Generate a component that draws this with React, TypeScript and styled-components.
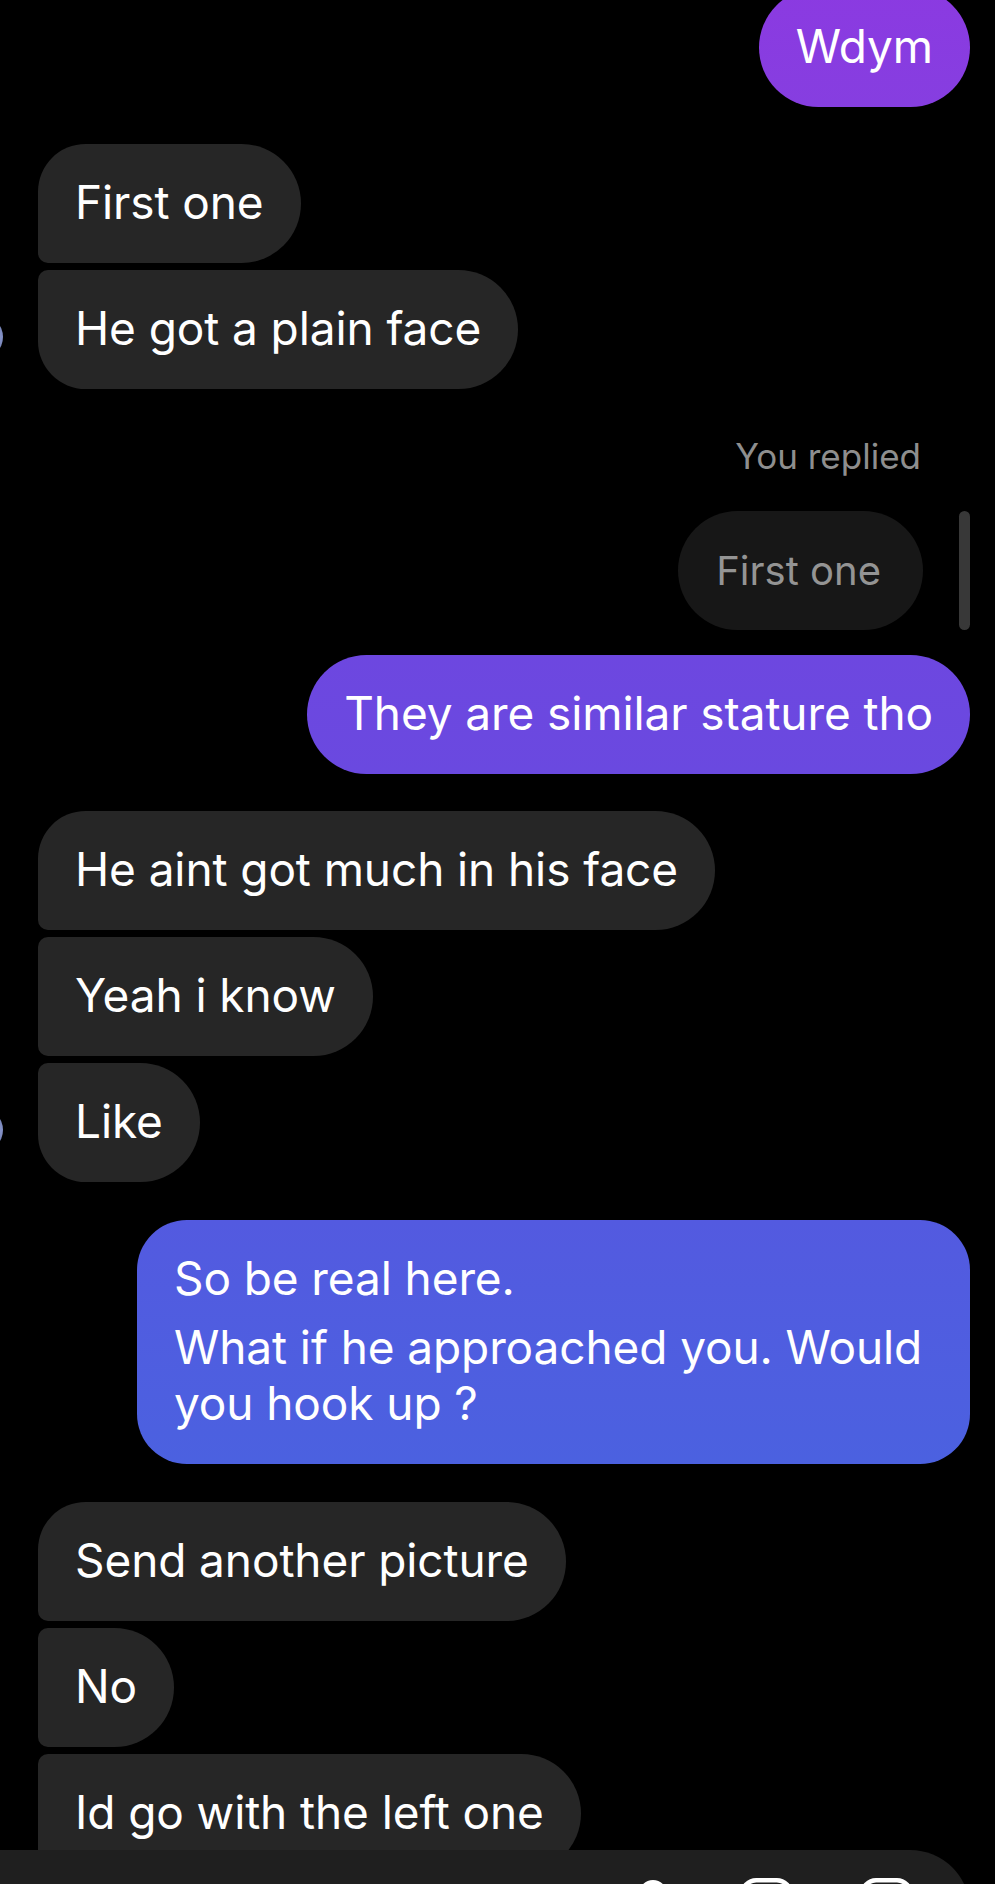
import React from "react";
import styled, { createGlobalStyle, css } from "styled-components";

const GlobalStyle = createGlobalStyle`
  html, body {
    margin: 0;
    padding: 0;
    background: #000;
    overflow: hidden;
  }
  body {
    font-family: Inter, "Noto Sans", "DejaVu Sans", sans-serif;
    -webkit-font-smoothing: antialiased;
  }
`;

const Screen = styled.div`
  width: 995px;
  height: 1884px;
  background: #000;
  display: flex;
  flex-direction: column;
  overflow: hidden;
`;

const Thread = styled.div`
  flex: 1;
  min-height: 0;
  overflow: hidden;
  display: flex;
  flex-direction: column;
  padding-right: 25px;
`;

const Section = styled.div<{ $mt: number; $align?: "start" | "end" }>`
  margin-top: ${(p) => p.$mt}px;
  display: flex;
  flex-direction: column;
  align-items: ${(p) => (p.$align === "end" ? "flex-end" : "flex-start")};
`;

const IncomingGroup = styled.div`
  display: flex;
  flex-direction: row;
  align-items: flex-end;
  gap: 35px;
`;

const Avatar = styled.div<{ $hidden?: boolean }>`
  width: 44px;
  height: 44px;
  flex-shrink: 0;
  margin-left: -41px;
  margin-bottom: 30px;
  border-radius: 50%;
  background: ${(p) =>
    p.$hidden ? "transparent" : "radial-gradient(circle at 85% 50%, #8c9ad0 0%, #5b6798 60%, #3a4262 100%)"};
`;

const Stack = styled.div`
  display: flex;
  flex-direction: column;
  align-items: flex-start;
  gap: 7px;
`;

type Pos = "first" | "middle" | "last" | "single";

const BIG = 48;
const SMALL = 10;

const Bubble = styled.div<{ $side: "in" | "out"; $pos?: Pos; $bg?: string; $multi?: boolean }>`
  box-sizing: border-box;
  max-width: 833px;
  padding: 30px 37px 33px;
  font-size: 46px;
  line-height: 56px;
  color: #fff;
  letter-spacing: -0.1px;
  white-space: pre-wrap;
  ${(p) =>
    p.$side === "in"
      ? css`
          background: #262626;
          border-radius: ${p.$pos === "first" || p.$pos === "single" ? BIG : SMALL}px 60px 60px
            ${p.$pos === "last" || p.$pos === "single" ? BIG : SMALL}px;
        `
      : css`
          background: ${p.$bg};
          border-radius: ${p.$multi ? 50 : 60}px;
        `}
`;

const Para = styled.div<{ $gap?: number }>`
  margin-top: ${(p) => p.$gap ?? 0}px;
`;

const ReplyLabel = styled.div`
  margin-right: 49px;
  font-size: 35px;
  line-height: 42px;
  color: #8e8e8e;
`;

const ReplyRow = styled.div`
  margin-top: 34px;
  display: flex;
  align-items: stretch;
  gap: 36px;
`;

const ReplyBubble = styled.div`
  background: #171717;
  color: #949494;
  font-size: 40px;
  line-height: 48px;
  padding: 36px 42px 35px 38px;
  border-radius: 60px;
`;

const ReplyBar = styled.div`
  width: 11px;
  border-radius: 6px;
  background: #383838;
`;

const ComposerClip = styled.div`
  height: 34px;
  flex-shrink: 0;
  overflow: hidden;
`;

const ComposerBar = styled.div`
  box-sizing: border-box;
  width: 970px;
  height: 130px;
  background: #1f1f1f;
  border-top-right-radius: 60px;
  display: flex;
  justify-content: flex-end;
  align-items: flex-start;
  padding: 28px 57px 0 0;
`;

const IconSlot = styled.div<{ $ml: number; $mt?: number }>`
  margin-left: ${(p) => p.$ml}px;
  margin-top: ${(p) => p.$mt ?? 0}px;
  display: flex;
`;

const MicIcon = () => (
  <svg width="28" height="60" viewBox="0 0 28 60" fill="none" stroke="#fff" strokeWidth="4" strokeLinecap="round">
    <rect x="2" y="2" width="24" height="38" rx="12" />
    <path d="M-6 30 a20 20 0 0 0 40 0" />
    <line x1="14" y1="50" x2="14" y2="58" />
  </svg>
);

const ImageIcon = () => (
  <svg width="53" height="53" viewBox="0 0 53 53" fill="none" stroke="#fff" strokeWidth="4.5" strokeLinejoin="round">
    <rect x="2.25" y="2.25" width="48.5" height="48.5" rx="14" />
    <circle cx="35" cy="16" r="4" />
    <path d="M3 40 L17 26 L32 41 L39 34 L50 44" />
  </svg>
);

const StickerIcon = () => (
  <svg width="53" height="53" viewBox="0 0 53 53" fill="none" stroke="#fff" strokeWidth="4.5" strokeLinejoin="round">
    <path d="M16 2.25 H37 A14 14 0 0 1 50.75 16 V30 L30 50.75 H16 A14 14 0 0 1 2.25 37 V16 A14 14 0 0 1 16 2.25 Z" />
    <path d="M50.75 30 H38 A8 8 0 0 0 30 38 V50.75" />
  </svg>
);

export default function App() {
  return (
    <>
      <GlobalStyle />
      <Screen>
        <Thread>
          <Section $mt={-12} $align="end">
            <Bubble $side="out" $bg="linear-gradient(180deg, #8b3ae1 0%, #863ee0 100%)">
              Wdym
            </Bubble>
          </Section>

          <Section $mt={37}>
            <IncomingGroup>
              <Avatar />
              <Stack>
                <Bubble $side="in" $pos="first">First one</Bubble>
                <Bubble $side="in" $pos="last">He got a plain face</Bubble>
              </Stack>
            </IncomingGroup>
          </Section>

          <Section $mt={46} $align="end">
            <ReplyLabel>You replied</ReplyLabel>
            <ReplyRow>
              <ReplyBubble>First one</ReplyBubble>
              <ReplyBar />
            </ReplyRow>
          </Section>

          <Section $mt={25} $align="end">
            <Bubble $side="out" $bg="linear-gradient(180deg, #6d47e0 0%, #6a49e0 100%)">
              They are similar stature tho
            </Bubble>
          </Section>

          <Section $mt={37}>
            <IncomingGroup>
              <Avatar />
              <Stack>
                <Bubble $side="in" $pos="first">He aint got much in his face</Bubble>
                <Bubble $side="in" $pos="middle">Yeah i know</Bubble>
                <Bubble $side="in" $pos="last">Like</Bubble>
              </Stack>
            </IncomingGroup>
          </Section>

          <Section $mt={38} $align="end">
            <Bubble $side="out" $multi $bg="linear-gradient(180deg, #535ae0 0%, #4b61e0 100%)">
              <Para>So be real here.</Para>
              <Para $gap={13}>What if he approached you. Would you hook up ?</Para>
            </Bubble>
          </Section>

          <Section $mt={38}>
            <IncomingGroup>
              <Avatar $hidden />
              <Stack>
                <Bubble $side="in" $pos="first">Send another picture</Bubble>
                <Bubble $side="in" $pos="middle">No</Bubble>
                <Bubble $side="in" $pos="middle">Id go with the left one</Bubble>
              </Stack>
            </IncomingGroup>
          </Section>
        </Thread>

        <ComposerClip>
          <ComposerBar>
            <IconSlot $ml={0} $mt={2}>
              <MicIcon />
            </IconSlot>
            <IconSlot $ml={73}>
              <ImageIcon />
            </IconSlot>
            <IconSlot $ml={67}>
              <StickerIcon />
            </IconSlot>
          </ComposerBar>
        </ComposerClip>
      </Screen>
    </>
  );
}
